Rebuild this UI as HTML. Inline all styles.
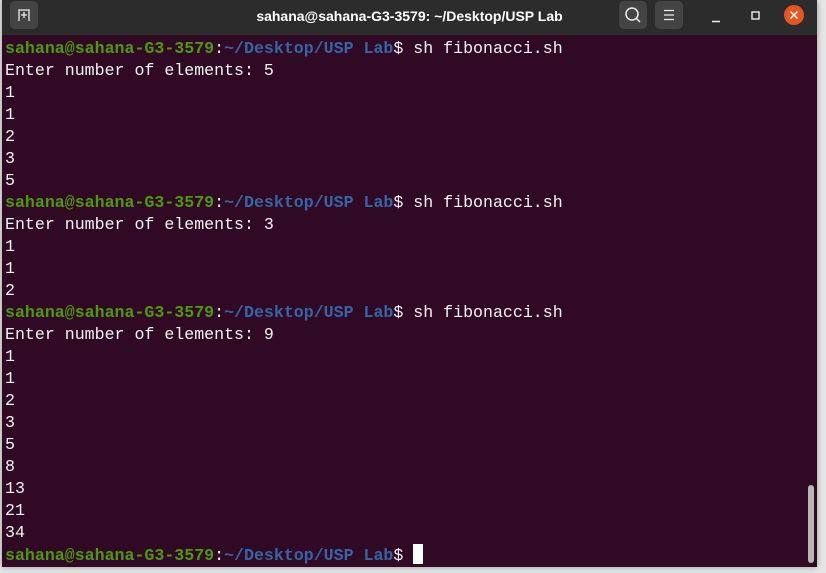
<!DOCTYPE html>
<html><head><style>
body{margin:0;width:826px;height:573px;background:#e6e6e6;position:relative;overflow:hidden}
.win{position:absolute;left:2px;top:0;width:815px;height:567px;background:#300a24;box-shadow:0 0 6px rgba(0,0,0,.35)}
.tb{position:absolute;left:0;top:0;width:815px;height:35px;background:#2c2c2c;}
.title{position:absolute;left:0;width:815px;top:8px;text-align:center;color:#fff;font:bold 14px "Liberation Sans",sans-serif}
.btn{position:absolute;top:1px;width:28px;height:28px;background:#444;border-radius:5px}
pre{position:absolute;left:3px;top:38px;margin:0;font:16.6px/22px "Liberation Mono",monospace;color:#f2f2f2}
.g{color:#4e9a06;font-weight:bold}.b{color:#3465a4;font-weight:bold}
.cur{display:inline-block;width:10px;height:20px;background:#fff;vertical-align:-4px}
.sb{position:absolute;left:806px;top:485px;width:6px;height:78px;background:#b8b8b8;border-radius:3px}
</style></head><body>
<div class="win">
<div class="tb">
<div class="btn" style="left:8px"><svg width="28" height="28"><path d="M9 20V9h10v11M14 11v6M11 14h6" stroke="#eee" fill="none" stroke-width="1.3"/></svg></div>
<div class="title">sahana@sahana-G3-3579: ~/Desktop/USP Lab</div>
<div class="btn" style="left:617px"><svg width="28" height="28"><circle cx="13" cy="13" r="6" stroke="#eee" fill="none" stroke-width="1.5"/><path d="M17 17l4 4" stroke="#eee" stroke-width="1.5"/></svg></div>
<div class="btn" style="left:653px"><svg width="28" height="28"><path d="M9 9.5h10M9 14h10M9 18.5h10" stroke="#eee" stroke-width="1.3"/></svg></div>
<svg style="position:absolute;left:704px;top:5px" width="110" height="24"><path d="M6 16.5h8" stroke="#eee" stroke-width="1.5"/><rect x="46" y="7" width="7" height="7" stroke="#eee" fill="none" stroke-width="1.4"/><circle cx="88" cy="10" r="10" fill="#e95420"/><path d="M84.5 6.5l7 7M91.5 6.5l-7 7" stroke="#fff" stroke-width="1.5"/></svg>
</div>
<pre><span class="g">sahana@sahana-G3-3579</span>:<span class="b">~/Desktop/USP Lab</span>$ sh fibonacci.sh
Enter number of elements: 5
1
1
2
3
5
<span class="g">sahana@sahana-G3-3579</span>:<span class="b">~/Desktop/USP Lab</span>$ sh fibonacci.sh
Enter number of elements: 3
1
1
2
<span class="g">sahana@sahana-G3-3579</span>:<span class="b">~/Desktop/USP Lab</span>$ sh fibonacci.sh
Enter number of elements: 9
1
1
2
3
5
8
13
21
34
<span class="g">sahana@sahana-G3-3579</span>:<span class="b">~/Desktop/USP Lab</span>$ <span class="cur"></span></pre>
<div class="sb"></div>
</div>
</body></html>
